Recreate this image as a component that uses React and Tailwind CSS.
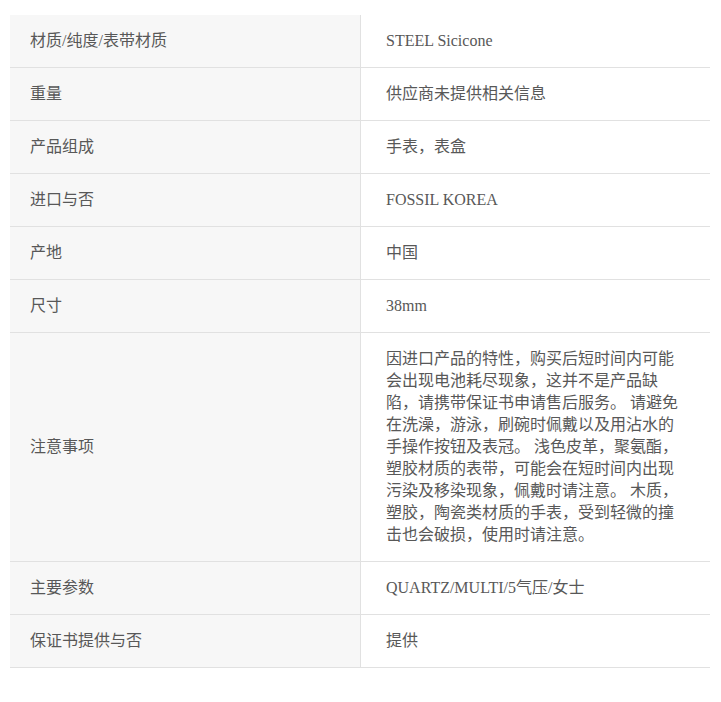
const rows = [
  ["材质/纯度/表带材质", "STEEL Sicicone"],
  ["重量", "供应商未提供相关信息"],
  ["产品组成", "手表，表盒"],
  ["进口与否", "FOSSIL KOREA"],
  ["产地", "中国"],
  ["尺寸", "38mm"],
  [
    "注意事项",
    "因进口产品的特性，购买后短时间内可能会出现电池耗尽现象，这并不是产品缺陷，请携带保证书申请售后服务。 请避免在洗澡，游泳，刷碗时佩戴以及用沾水的手操作按钮及表冠。 浅色皮革，聚氨酯，塑胶材质的表带，可能会在短时间内出现污染及移染现象，佩戴时请注意。 木质，塑胶，陶瓷类材质的手表，受到轻微的撞击也会破损，使用时请注意。",
  ],
  ["主要参数", "QUARTZ/MULTI/5气压/女士"],
  ["保证书提供与否", "提供"],
];

export default function App() {
  return (
    <div className="bg-white w-[721px] h-[702px] pt-[15px] px-[10px] font-['Liberation_Serif','Noto_Sans_CJK_SC',serif] text-[16px] text-[#585858]">
      <div className="w-[700px]">
        {rows.map(([label, value]) => (
          <div key={label} className="flex border-b border-[#e1e1e1]">
            <div className="w-[351px] shrink-0 bg-[#f7f7f7] border-r border-[#e1e1e1] pl-[20px] flex items-center leading-[22px]">
              {label}
            </div>
            <div className="flex-1 pl-[25px] pr-[26px] py-[15px] leading-[22px] h-fit">{value}</div>
          </div>
        ))}
      </div>
    </div>
  );
}
